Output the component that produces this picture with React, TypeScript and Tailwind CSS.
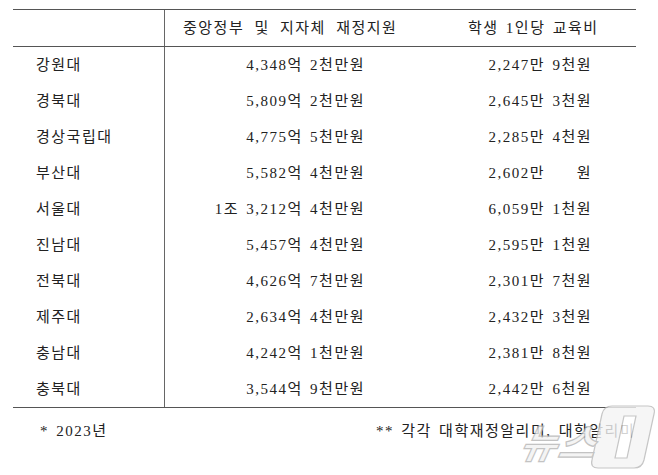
import React from "react";

type Row = { name: string; gov: React.ReactNode; perStudent: React.ReactNode };

const rows: Row[] = [
  { name: "강원대", gov: "4,348억 2천만원", perStudent: "2,247만 9천원" },
  { name: "경북대", gov: "5,809억 2천만원", perStudent: "2,645만 3천원" },
  { name: "경상국립대", gov: "4,775억 5천만원", perStudent: "2,285만 4천원" },
  {
    name: "부산대",
    gov: "5,582억 4천만원",
    perStudent: (
      <>
        2,602만 <span className="invisible">1천</span>원
      </>
    ),
  },
  { name: "서울대", gov: "1조 3,212억 4천만원", perStudent: "6,059만 1천원" },
  { name: "진남대", gov: "5,457억 4천만원", perStudent: "2,595만 1천원" },
  { name: "전북대", gov: "4,626억 7천만원", perStudent: "2,301만 7천원" },
  { name: "제주대", gov: "2,634억 4천만원", perStudent: "2,432만 3천원" },
  { name: "충남대", gov: "4,242억 1천만원", perStudent: "2,381만 8천원" },
  { name: "충북대", gov: "3,544억 9천만원", perStudent: "2,442만 6천원" },
];

const News1Mark = () => (
  <svg width="140" height="70" viewBox="0 0 140 70" className="opacity-80">
    <g fill="#f4f4f4" stroke="#b9b9b9" strokeWidth="1.2">
      <path d="M96 4 H132 Q140 4 138 12 L128 58 Q126 66 118 66 H82 Q74 66 76 58 L86 12 Q88 4 96 4 Z" />
      <path d="M108 14 H120 L111 56 H99 Z" fill="#ffffff" />
    </g>
    <text
      x="4"
      y="56"
      fontSize="40"
      fontWeight="700"
      fontStyle="italic"
      fill="#f2f2f2"
      stroke="#b5b5b5"
      strokeWidth="1.2"
      fontFamily="'Noto Sans CJK KR', sans-serif"
      transform="skewX(-12) translate(10 0)"
    >
      뉴스
    </text>
  </svg>
);

export default function App() {
  return (
    <div
      className="relative w-[658px] h-[475px] bg-white text-[#222] text-[15px] overflow-hidden tracking-[1.5px] [word-spacing:2px]"
      style={{ fontFamily: "'Liberation Serif', 'Noto Sans CJK KR', serif" }}
    >
      <div className="ml-[13px] mt-[9px] w-[623px] border-t border-b border-[#555]">
        {/* Header */}
        <div className="flex h-[37px] items-center border-b border-[#555]">
          <div className="w-[152px] h-full border-r border-[#666]"></div>
          <div className="w-[215px] pl-[18px] whitespace-nowrap [word-spacing:5px]">
            중앙정부 및 지자체 재정지원
          </div>
          <div className="flex-1 pl-[88px] whitespace-nowrap">학생 1인당 교육비</div>
        </div>

        {rows.map((r) => (
          <div key={r.name} className="flex h-[36px] items-center">
            <div className="w-[152px] h-full flex items-center pl-[23px] border-r border-[#666]">
              {r.name}
            </div>
            <div className="w-[215px] text-right pr-[15px] whitespace-nowrap">{r.gov}</div>
            <div className="flex-1 text-right pr-[44px] whitespace-nowrap">{r.perStudent}</div>
          </div>
        ))}
      </div>

      <div className="flex mt-[12px]">
        <div className="w-[376px] pl-[40px]">* 2023년</div>
        <div className="whitespace-nowrap">** 각각 대학재정알리미, 대학알리미</div>
      </div>

      <div className="absolute left-[516px] top-[402px]">
        <News1Mark />
      </div>
    </div>
  );
}
